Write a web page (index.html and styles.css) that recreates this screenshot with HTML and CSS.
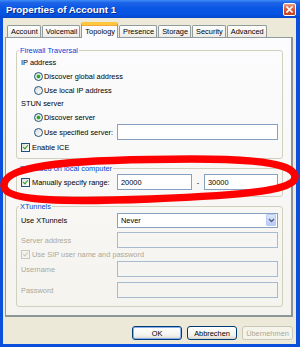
FILE: index.html
```html
<!DOCTYPE html>
<html lang="en">
<head>
    <meta charset="UTF-8">
    <meta name="viewport" content="width=device-width, initial-scale=1.0">
    <title>Properties of Account 1</title>
    <link rel="stylesheet" href="styles.css">
</head>
<body>
    <div class="window">
        <div class="titlebar">
            <span class="title">Properties of Account 1</span>
            <span class="close">
                <svg width="7" height="7" viewBox="0 0 7 7"><path d="M1 1 L6 6 M6 1 L1 6" stroke="#fff" stroke-width="1.6" stroke-linecap="square"/></svg>
            </span>
        </div>
        <div class="frame">
            <div class="tabs">
                <span class="tab">Account</span>
                <span class="tab">Voicemail</span>
                <span class="tab active">Topology</span>
                <span class="tab">Presence</span>
                <span class="tab">Storage</span>
                <span class="tab">Security</span>
                <span class="tab">Advanced</span>
            </div>
            <div class="panel">
                <fieldset class="group">
                    <legend>Firewall Traversal</legend>
                    <div class="row caption">IP address</div>
                    <div class="row option"><span class="radio on"></span>Discover global address</div>
                    <div class="row option"><span class="radio"></span>Use local IP address</div>
                    <div class="row caption">STUN server</div>
                    <div class="row option"><span class="radio on"></span>Discover server</div>
                    <div class="row field option">
                        <span class="label short"><span class="radio"></span>Use specified server:</span>
                        <input type="text" value="">
                    </div>
                    <div class="row checkrow"><span class="check on"></span>Enable ICE</div>
                </fieldset>

                <fieldset class="group port">
                    <legend>Port used on local computer</legend>
                    <div class="row field">
                        <span class="label"><span class="check on"></span>Manually specify range:</span>
                        <input type="text" class="range" value="20000">
                        <span class="dash">-</span>
                        <input type="text" class="range" value="30000">
                    </div>
                </fieldset>

                <fieldset class="group tunnels">
                    <legend>XTunnels</legend>
                    <div class="row field">
                        <span class="label">Use XTunnels</span>
                        <div class="combo">
                            <span class="combo-text">Never</span>
                            <span class="drop">
                                <svg width="7" height="5" viewBox="0 0 7 5"><path d="M1 1 L3.5 3.5 L6 1" fill="none" stroke="#4d6185" stroke-width="1.4"/></svg>
                            </span>
                        </div>
                    </div>
                    <div class="row field spaced disabled">
                        <span class="label">Server address</span>
                        <input type="text" value="" disabled>
                    </div>
                    <div class="row checkrow small disabled"><span class="check on off"></span>Use SIP user name and password</div>
                    <div class="row field disabled">
                        <span class="label">Username</span>
                        <input type="text" value="" disabled>
                    </div>
                    <div class="row field spaced-more disabled">
                        <span class="label">Password</span>
                        <input type="password" value="" disabled>
                    </div>
                </fieldset>
            </div>
            <div class="buttons">
                <button class="btn default">OK</button>
                <button class="btn">Abbrechen</button>
                <button class="btn" disabled>Übernehmen</button>
            </div>
        </div>

        <!-- hand drawn marker around the port range -->
        <svg class="marker" width="300" height="347" viewBox="0 0 300 347">
            <path d="M150 159.5 C230 157.5, 295 160, 295 177 C295 190, 250 195, 150 199 C70 202, 5 202, 4 186 C3 170, 40 161, 150 159.5 Z" fill="none" stroke="#ff0000" stroke-width="7.5"/>
        </svg>
    </div>
</body>
</html>
```

FILE: styles.css
```css
body {
    margin: 0;
    font-family: "Liberation Sans", Arial, sans-serif;
    font-size: 7.4px;
    color: #000;
    background: #fff;
}
.window {
    position: relative;
    width: 300px;
    height: 347px;
    display: flex;
    flex-direction: column;
}
.titlebar {
    height: 18px;
    flex: none;
    display: flex;
    align-items: center;
    justify-content: space-between;
    padding: 0 4px 0 6px;
    background: linear-gradient(to bottom, #3d8cf8 0%, #1f65e8 14%, #0a56e4 45%, #0653e2 80%, #0444c9 100%);
}
.title {
    color: #fff;
    font-weight: bold;
    font-size: 9.8px;
    text-shadow: 1px 1px 0 #0b2a8a;
}
.close {
    width: 13px;
    height: 13px;
    box-sizing: border-box;
    border: 1px solid #fff;
    border-radius: 2px;
    background: linear-gradient(to bottom, #e99f86 0%, #da5d3d 45%, #c8401f 100%);
    display: flex;
    align-items: center;
    justify-content: center;
}
.frame {
    flex: 1;
    background: #ece9d8;
    border-style: solid;
    border-color: #0a50dd;
    border-width: 0 4px 3px 3px;
    padding: 5px 3px 0 2px;
    display: flex;
    flex-direction: column;
}
.tabs {
    height: 14px;
    display: flex;
    align-items: flex-end;
    margin-left: 2px;
}
.tab {
    height: 12px;
    box-sizing: border-box;
    padding: 0 2px 0 3px;
    margin-right: 1px;
    border: 1px solid #919b9c;
    border-bottom: none;
    border-radius: 2px 2px 0 0;
    background: linear-gradient(to bottom, #ffffff, #ecebe6);
    display: flex;
    align-items: center;
}
.tab.active {
    height: 16px;
    margin-bottom: -1px;
    position: relative;
    z-index: 1;
    border-top: 3px solid #ffc73c;
    box-shadow: inset 0 1px 0 #f3a73c;
    background: #fcfcfe;
    padding-bottom: 1px;
}
.panel {
    height: 280px;
    box-sizing: border-box;
    border: 1px solid #919b9c;
    border-right: 2px solid #8c9597;
    border-bottom: 2px solid #8c9597;
    background: linear-gradient(to bottom, #fcfcfe 0%, #f4f3ee 100%);
    padding: 8px 0 0 10px;
}
.group {
    width: 267px;
    box-sizing: border-box;
    margin: 0;
    padding: 1px 4px 3px 4px;
    border: 1px solid #d0d0bf;
    border-radius: 3px;
}
.group legend {
    line-height: 9px;
    padding: 0 1px;
    margin-left: -2px;
    color: #0046d5;
}
.group.port {
    margin-top: 5px;
    padding-bottom: 6px;
}
.group.tunnels {
    margin-top: 5px;
    padding-bottom: 8px;
}
.row {
    display: flex;
    align-items: center;
    height: 14px;
}
.row.caption {
    height: 13px;
}
.row.option {
    padding-left: 13px;
}
.row.checkrow {
    height: 15px;
}
.row.checkrow.small {
    height: 13px;
}
.row.field {
    height: 16px;
}
.row.field.option {
    padding-left: 0;
}
.row.spaced {
    margin-top: 4px;
}
.row.spaced-more {
    margin-top: 5px;
}
.label {
    width: 96px;
    flex: none;
    display: flex;
    align-items: center;
}
.label.short {
    width: 83px;
    padding-left: 13px;
}
.disabled {
    color: #aca899;
}
input {
    flex: 1;
    min-width: 0;
    height: 16px;
    box-sizing: border-box;
    margin: 0;
    padding: 0 3px;
    border: 1px solid #86a1c0;
    background: #fff;
    font-family: inherit;
    font-size: inherit;
    color: #000;
    outline: none;
}
input:disabled {
    border-color: #a8bad0;
    background: transparent;
}
input.range {
    flex: none;
    width: 75px;
}
.dash {
    width: 12px;
    text-align: center;
    flex: none;
}
.field input:last-child.range {
    width: 74px;
}
.radio {
    width: 9px;
    height: 9px;
    box-sizing: border-box;
    flex: none;
    border: 1px solid #1c5180;
    border-radius: 50%;
    background: linear-gradient(135deg, #dcdcd7, #ffffff);
    margin-right: 1px;
    display: flex;
    align-items: center;
    justify-content: center;
}
.radio.on::after {
    content: "";
    width: 3px;
    height: 3px;
    border-radius: 50%;
    background: #21a121;
    box-shadow: 0 0 0 0.5px #5cc55c;
}
.check {
    width: 9px;
    height: 9px;
    box-sizing: border-box;
    flex: none;
    border: 1px solid #1c5180;
    background: linear-gradient(135deg, #dcdcd7, #ffffff);
    margin-right: 2px;
    position: relative;
}
.check.on::after {
    content: "";
    position: absolute;
    left: 1.5px;
    top: 0px;
    width: 2px;
    height: 4px;
    border: solid #21a121;
    border-width: 0 1.5px 1.5px 0;
    transform: rotate(40deg);
}
.check.off {
    border-color: #cac8bb;
    background: #f4f3ee;
}
.check.off::after {
    border-color: #cac8bb;
}
.combo {
    flex: 1;
    height: 15px;
    box-sizing: border-box;
    border: 1px solid #86a1c0;
    background: #fff;
    display: flex;
    align-items: center;
    justify-content: space-between;
    padding: 1px;
}
.combo-text {
    padding-left: 2px;
}
.drop {
    width: 10px;
    height: 12px;
    box-sizing: border-box;
    border: 1px solid #bacbf5;
    border-radius: 1px;
    background: linear-gradient(to bottom, #dce6fc, #b9cbf6);
    display: flex;
    align-items: center;
    justify-content: center;
}
.buttons {
    display: flex;
    justify-content: flex-end;
    gap: 5px;
    margin-top: 9px;
}
.btn {
    width: 50px;
    height: 14px;
    box-sizing: border-box;
    padding: 0;
    border: 1px solid #003c74;
    border-radius: 3px;
    background: linear-gradient(to bottom, #ffffff 0%, #f3f3ee 70%, #d9d4c9 100%);
    font-family: inherit;
    font-size: inherit;
    color: #000;
}
.btn.default {
    box-shadow: inset 0 0 0 1px #8aaef0;
}
.btn:disabled {
    width: 51px;
    border-color: #c9c7ba;
    background: #f5f4ea;
    color: #aca899;
}
.marker {
    position: absolute;
    left: 0;
    top: 0;
    pointer-events: none;
}
```
